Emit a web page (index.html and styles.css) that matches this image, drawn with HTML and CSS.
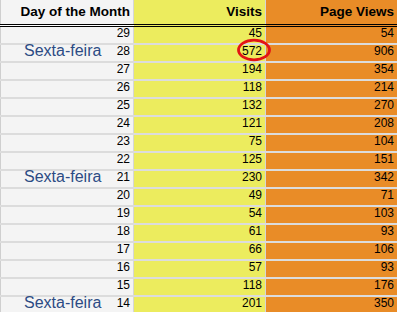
FILE: index.html
```html
<!DOCTYPE html>
<html>
<head>
<meta charset="utf-8">
<link rel="stylesheet" href="styles.css">
</head>
<body>
<table class="stats">
  <thead>
    <tr>
      <th class="c-day">Day of the Month</th>
      <th class="c-visits">Visits</th>
      <th class="c-views">Page Views</th>
    </tr>
  </thead>
  <tbody>
    <tr><td class="c-day"><span class="num">29</span></td><td class="c-visits">45</td><td class="c-views">54</td></tr>
    <tr><td class="c-day"><span class="weekday">Sexta-feira</span><span class="num">28</span></td><td class="c-visits mark-cell"><span class="num">572</span><svg class="ring" width="36" height="24" viewBox="0 0 36 24"><ellipse cx="18" cy="12" rx="15.5" ry="9.8" fill="none" stroke="#e31414" stroke-width="2.8"/></svg></td><td class="c-views">906</td></tr>
    <tr><td class="c-day"><span class="num">27</span></td><td class="c-visits">194</td><td class="c-views">354</td></tr>
    <tr><td class="c-day"><span class="num">26</span></td><td class="c-visits">118</td><td class="c-views">214</td></tr>
    <tr><td class="c-day"><span class="num">25</span></td><td class="c-visits">132</td><td class="c-views">270</td></tr>
    <tr><td class="c-day"><span class="num">24</span></td><td class="c-visits">121</td><td class="c-views">208</td></tr>
    <tr><td class="c-day"><span class="num">23</span></td><td class="c-visits">75</td><td class="c-views">104</td></tr>
    <tr><td class="c-day"><span class="num">22</span></td><td class="c-visits">125</td><td class="c-views">151</td></tr>
    <tr><td class="c-day"><span class="weekday">Sexta-feira</span><span class="num">21</span></td><td class="c-visits">230</td><td class="c-views">342</td></tr>
    <tr><td class="c-day"><span class="num">20</span></td><td class="c-visits">49</td><td class="c-views">71</td></tr>
    <tr><td class="c-day"><span class="num">19</span></td><td class="c-visits">54</td><td class="c-views">103</td></tr>
    <tr><td class="c-day"><span class="num">18</span></td><td class="c-visits">61</td><td class="c-views">93</td></tr>
    <tr><td class="c-day"><span class="num">17</span></td><td class="c-visits">66</td><td class="c-views">106</td></tr>
    <tr><td class="c-day"><span class="num">16</span></td><td class="c-visits">57</td><td class="c-views">93</td></tr>
    <tr><td class="c-day"><span class="num">15</span></td><td class="c-visits">118</td><td class="c-views">176</td></tr>
    <tr><td class="c-day"><span class="weekday">Sexta-feira</span><span class="num">14</span></td><td class="c-visits">201</td><td class="c-views">350</td></tr>
  </tbody>
</table>
</body>
</html>
```

FILE: styles.css
```css
html, body {
  margin: 0;
  padding: 0;
  background: #ffffff;
}

body {
  font-family: "Liberation Sans", Arial, sans-serif;
  overflow: hidden;
}

.stats {
  border-collapse: collapse;
  table-layout: fixed;
  width: 397px;
  font-size: 12px;
  color: #000;
}

.stats th,
.stats td {
  padding: 0 3px 0 0;
  text-align: right;
  vertical-align: middle;
  white-space: nowrap;
}

.stats th {
  height: 22px;
  font-size: 13.5px;
  font-weight: bold;
  border-bottom: 3px double #000;
  box-sizing: border-box;
  padding-bottom: 1px;
}

.stats thead tr {
  height: 25px;
}

.stats tbody tr {
  height: 18px;
}

.stats td {
  height: 18px;
  line-height: 13px;
  padding-bottom: 3px;
  box-sizing: border-box;
  border-bottom: 2px solid #dcdcdc;
}

.c-day {
  width: 133px;
  background: #f4f4f4;
  border-left: 1px solid #cfcfcf;
  border-right: 1px solid #d6d6d6;
}

.c-visits {
  width: 132px;
  background: #ecec5e;
  border-right: 1px solid #d6d6d6;
}

.c-views {
  background: #e98c27;
}

td.c-day {
  position: relative;
}

.weekday {
  position: absolute;
  left: 23px;
  top: -3px;
  font-size: 16px;
  line-height: 18px;
  color: #2c4b84;
}

.mark-cell {
  position: relative;
}

.ring {
  position: absolute;
  right: -7px;
  top: -7px;
  overflow: visible;
}
```
